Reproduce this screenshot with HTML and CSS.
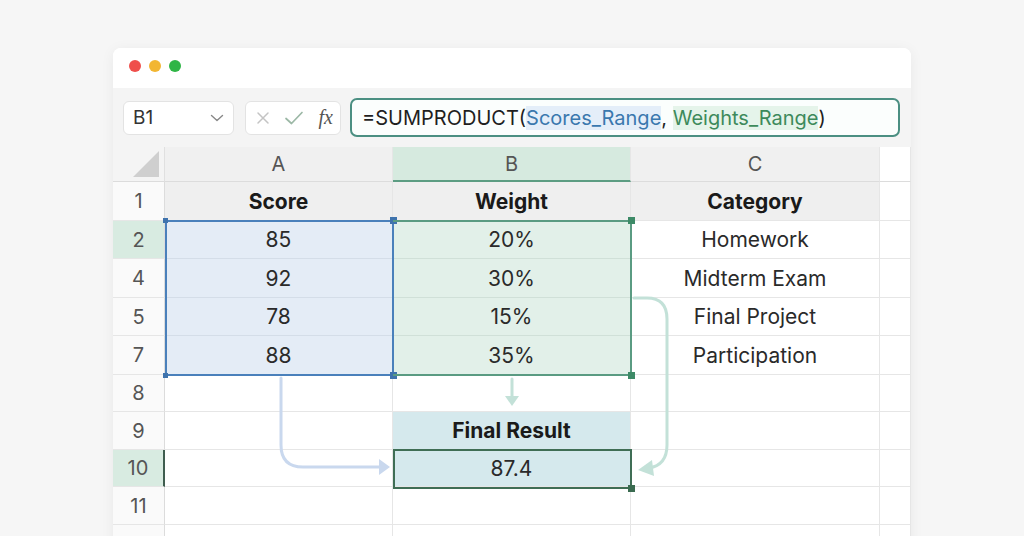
FILE: index.html
```html
<!DOCTYPE html>
<html lang="en">
<head>
<meta charset="utf-8">
<title>SUMPRODUCT weighted score</title>
<link rel="stylesheet" href="styles.css">
</head>
<body>
<div class="window">
  <div class="titlebar">
    <span class="dot red"></span>
    <span class="dot yellow"></span>
    <span class="dot green"></span>
  </div>
  <div class="toolbar">
    <div class="namebox">
      <span>B1</span>
      <svg class="chev" width="14" height="8" viewBox="0 0 14 8"><path d="M1.5 1.5 L7 6.5 L12.5 1.5" fill="none" stroke="#888" stroke-width="1.4" stroke-linecap="round" stroke-linejoin="round"/></svg>
    </div>
    <div class="btnbox">
      <svg width="14" height="14" viewBox="0 0 14 14"><path d="M2 2 L12 12 M12 2 L2 12" stroke="#c4c4c4" stroke-width="1.5" stroke-linecap="round"/></svg>
      <svg width="20" height="16" viewBox="0 0 20 16"><path d="M2 8.5 L7.5 13.5 L18 2.5" fill="none" stroke="#9cb8a6" stroke-width="1.7" stroke-linecap="round" stroke-linejoin="round"/></svg>
      <span class="fx">fx</span>
    </div>
    <div class="formula">
      <span>=SUMPRODUCT(</span><span class="ref-a">Scores_Range</span><span>, </span><span class="ref-b">Weights_Range</span><span>)</span>
    </div>
  </div>

  <div class="sheet">
    <div class="cell corner"><span class="tri"></span></div>
    <div class="cell colh">A</div>
    <div class="cell colh sel">B</div>
    <div class="cell colh">C</div>
    <div class="cell colh blank"></div>

    <div class="cell rh">1</div>
    <div class="cell head">Score</div>
    <div class="cell head">Weight</div>
    <div class="cell head">Category</div>
    <div class="cell"></div>

    <div class="cell rh on">2</div>
    <div class="cell va">85</div>
    <div class="cell vb">20%</div>
    <div class="cell">Homework</div>
    <div class="cell"></div>

    <div class="cell rh">4</div>
    <div class="cell va">92</div>
    <div class="cell vb">30%</div>
    <div class="cell">Midterm Exam</div>
    <div class="cell"></div>

    <div class="cell rh">5</div>
    <div class="cell va">78</div>
    <div class="cell vb">15%</div>
    <div class="cell">Final Project</div>
    <div class="cell"></div>

    <div class="cell rh">7</div>
    <div class="cell va">88</div>
    <div class="cell vb">35%</div>
    <div class="cell">Participation</div>
    <div class="cell"></div>

    <div class="cell rh">8</div>
    <div class="cell"></div>
    <div class="cell"></div>
    <div class="cell"></div>
    <div class="cell"></div>

    <div class="cell rh">9</div>
    <div class="cell"></div>
    <div class="cell res head-res">Final Result</div>
    <div class="cell"></div>
    <div class="cell"></div>

    <div class="cell rh on mark">10</div>
    <div class="cell"></div>
    <div class="cell res">87.4</div>
    <div class="cell"></div>
    <div class="cell"></div>

    <div class="cell rh">11</div>
    <div class="cell"></div>
    <div class="cell"></div>
    <div class="cell"></div>
    <div class="cell"></div>

    <div class="cell rh">12</div>
    <div class="cell"></div>
    <div class="cell"></div>
    <div class="cell"></div>
    <div class="cell"></div>

    <!-- range outlines drawn over the grid -->
    <div class="range range-a">
      <i class="h tl"></i><i class="h tr"></i><i class="h bl"></i><i class="h br"></i>
    </div>
    <div class="range range-b">
      <i class="h tr"></i><i class="h br"></i>
    </div>
    <div class="range range-res">
      <i class="h br"></i>
    </div>

    <!-- flow arrows into the result cell -->
    <svg class="flow" width="798" height="389" viewBox="0 0 798 389">
      <path d="M168 231 V298 Q168 320 190 320 H268" fill="none" stroke="#c9d8ee" stroke-width="3" stroke-linecap="round"/>
      <path d="M266 312 L277 320 L266 328 Z" fill="#c9d8ee"/>
      <path d="M399 232 V250" fill="none" stroke="#c3e1d8" stroke-width="3" stroke-linecap="round"/>
      <path d="M392 249 L399 259 L406 249 Z" fill="#c3e1d8"/>
      <path d="M521 151 H534 Q554 151 554 172 V298 Q554 318 536 321" fill="none" stroke="#c3e1d8" stroke-width="3" stroke-linecap="round"/>
      <path d="M539 313 L525 323 L541 329 Z" fill="#c3e1d8"/>
    </svg>
  </div>
</div>
</body>
</html>
```

FILE: styles.css
```css
* { box-sizing: border-box; }

html, body {
  margin: 0;
  height: 100%;
  overflow: hidden;
}

body {
  background: #f6f6f6;
  font-family: Inter, "Noto Sans", "Liberation Sans", sans-serif;
  color: #222;
}

.window {
  margin: 48px 0 0 113px;
  width: 798px;
  height: 500px;
  background: #fff;
  border-radius: 8px 8px 0 0;
  box-shadow: 0 2px 14px rgba(0, 0, 0, 0.06);
  overflow: hidden;
}

/* title bar with traffic lights */
.titlebar {
  height: 40px;
  display: flex;
  align-items: center;
  gap: 8px;
  padding: 0 0 4px 16px;
  background: #fff;
}

.dot {
  width: 12px;
  height: 12px;
  border-radius: 50%;
}
.dot.red { background: #ef4f4b; }
.dot.yellow { background: #f2b632; }
.dot.green { background: #2fb546; }

/* formula toolbar */
.toolbar {
  height: 59px;
  background: #f4f4f4;
  display: flex;
  align-items: center;
  padding: 0 10px;
}

.namebox {
  width: 111px;
  height: 34px;
  background: #fff;
  border: 1px solid #e3e3e3;
  border-radius: 6px;
  display: flex;
  align-items: center;
  justify-content: space-between;
  padding: 0 9px 0 9px;
  font-size: 19px;
  color: #333;
}

.btnbox {
  width: 96px;
  height: 34px;
  margin-left: 11px;
  background: #fff;
  border: 1px solid #e3e3e3;
  border-radius: 6px;
  display: flex;
  align-items: center;
  justify-content: space-between;
  padding: 0 7px 0 10px;
}

.fx {
  font-family: "Liberation Serif", "DejaVu Serif", serif;
  font-style: italic;
  font-size: 20px;
  color: #555;
}

.formula {
  flex: 1;
  height: 39px;
  margin-left: 9px;
  margin-right: 1px;
  background: #fbfefd;
  border: 2px solid #4b8f82;
  border-radius: 7px;
  display: flex;
  align-items: center;
  padding-left: 10px;
  font-size: 20px;
  color: #1f1f1f;
  white-space: pre;
}

.ref-a {
  color: #3a78ae;
  background: #e4eef9;
}

.ref-b {
  color: #3d8a5b;
  background: #e5f4ea;
}

/* spreadsheet grid */
.sheet {
  position: relative;
  display: grid;
  grid-template-columns: 52px 228px 238px 249px 31px;
  grid-template-rows: 35px 39px 38px 39px 38px 39px 37px 38px 37px 38px 38px;
  font-size: 21px;
}

.cell {
  border-right: 1px solid #e6e6e6;
  border-bottom: 1px solid #e6e6e6;
  display: flex;
  align-items: center;
  justify-content: center;
  color: #2a2a2a;
  background: #fff;
}

.corner {
  background: #f4f4f4;
  border-bottom: 1px solid #dcdcdc;
  border-right: 1px solid #e0e0e0;
  position: relative;
}

.tri {
  position: absolute;
  right: 5px;
  bottom: 4px;
  width: 0;
  height: 0;
  border-left: 26px solid transparent;
  border-bottom: 26px solid #cfcfcf;
}

.colh {
  background: #f0f0f0;
  border-bottom: 1px solid #dcdcdc;
  color: #555;
  font-size: 20px;
}

.colh.sel {
  background: #d6eadf;
  border-bottom: 2px solid #5d9d83;
}

.colh.blank {
  background: #fff;
}

.rh {
  background: #fafafa;
  color: #555;
  font-size: 20px;
  border-right: 1px solid #dcdcdc;
}

.rh.on {
  background: #d8ebe1;
}

.rh.mark {
  border-right: 2px solid #3f5d4f;
}

.head {
  background: #efefef;
  font-weight: 700;
  color: #1a1a1a;
}

.va {
  background: #e4ecf6;
  border-bottom-color: #d4dde8;
}

.vb {
  background: #e2f0e9;
  border-bottom-color: #d0e0d8;
}

.res {
  background: #d5e9ed;
}

.head-res {
  font-weight: 700;
  color: #1a1a1a;
}

/* selection outlines */
.range {
  position: absolute;
  pointer-events: none;
}

.range-a {
  left: 52px;
  top: 73px;
  width: 229px;
  height: 156px;
  border: 2px solid #4a80bb;
}

.range-b {
  left: 280px;
  top: 73px;
  width: 239px;
  height: 156px;
  border: 2px solid #5a9b82;
  border-left: none;
}

.range-res {
  left: 280px;
  top: 302px;
  width: 239px;
  height: 40px;
  border: 2px solid #3f6e55;
}

.h {
  position: absolute;
  width: 7px;
  height: 7px;
  background: #3f73ad;
}
.range-b .h { background: #3d8a67; }
.range-res .h { background: #3a6b50; }

.h.tl { left: -5px; top: -5px; }
.h.tr { right: -5px; top: -5px; }
.h.bl { left: -5px; bottom: -5px; }
.h.br { right: -5px; bottom: -5px; }

.range-a .h.tl, .range-a .h.bl {
  width: 5px;
  height: 5px;
  left: -4px;
}
.range-a .h.tl { top: -4px; }
.range-a .h.bl { bottom: -4px; }

.flow {
  position: absolute;
  left: 0;
  top: 0;
  pointer-events: none;
}
```
